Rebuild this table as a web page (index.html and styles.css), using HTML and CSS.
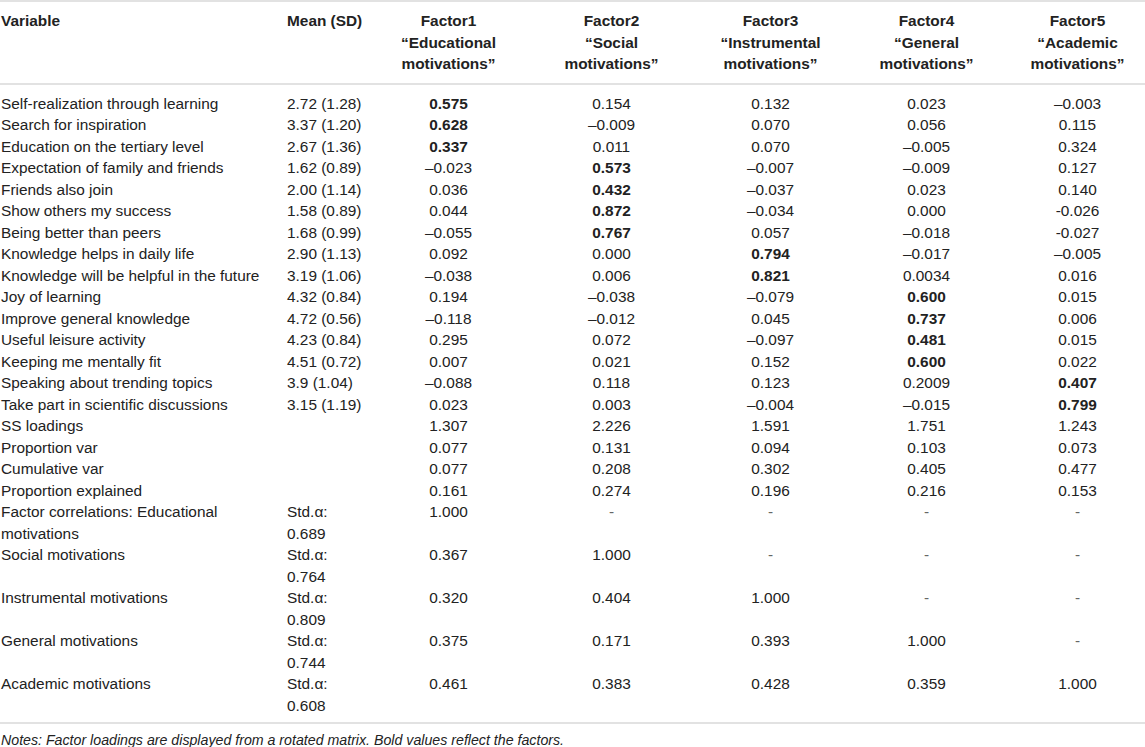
FILE: index.html
```html
<!DOCTYPE html>
<html lang="en">
<head>
    <meta charset="UTF-8">
    <meta name="viewport" content="width=device-width, initial-scale=1.0">
    <title>Factor analysis of motivations</title>
    <link rel="stylesheet" href="styles.css">
</head>
<body>
    <table class="factors">
        <colgroup>
            <col class="c-var">
            <col class="c-mean">
            <col class="c-f1">
            <col class="c-f2">
            <col class="c-f3">
            <col class="c-f4">
            <col class="c-f5">
        </colgroup>
        <thead>
            <tr>
                <th class="left">Variable</th>
                <th class="left mean">Mean (SD)</th>
                <th>Factor1<br>“Educational<br>motivations”</th>
                <th>Factor2<br>“Social<br>motivations”</th>
                <th>Factor3<br>“Instrumental<br>motivations”</th>
                <th>Factor4<br>“General<br>motivations”</th>
                <th>Factor5<br>“Academic<br>motivations”</th>
            </tr>
        </thead>
        <tbody>
            <tr class="first"><td class="left">Self-realization through learning</td><td class="left mean">2.72 (1.28)</td><td><b>0.575</b></td><td>0.154</td><td>0.132</td><td>0.023</td><td>–0.003</td></tr>
            <tr><td class="left">Search for inspiration</td><td class="left mean">3.37 (1.20)</td><td><b>0.628</b></td><td>–0.009</td><td>0.070</td><td>0.056</td><td>0.115</td></tr>
            <tr><td class="left">Education on the tertiary level</td><td class="left mean">2.67 (1.36)</td><td><b>0.337</b></td><td>0.011</td><td>0.070</td><td>–0.005</td><td>0.324</td></tr>
            <tr><td class="left">Expectation of family and friends</td><td class="left mean">1.62 (0.89)</td><td>–0.023</td><td><b>0.573</b></td><td>–0.007</td><td>–0.009</td><td>0.127</td></tr>
            <tr><td class="left">Friends also join</td><td class="left mean">2.00 (1.14)</td><td>0.036</td><td><b>0.432</b></td><td>–0.037</td><td>0.023</td><td>0.140</td></tr>
            <tr><td class="left">Show others my success</td><td class="left mean">1.58 (0.89)</td><td>0.044</td><td><b>0.872</b></td><td>–0.034</td><td>0.000</td><td>-0.026</td></tr>
            <tr><td class="left">Being better than peers</td><td class="left mean">1.68 (0.99)</td><td>–0.055</td><td><b>0.767</b></td><td>0.057</td><td>–0.018</td><td>-0.027</td></tr>
            <tr><td class="left">Knowledge helps in daily life</td><td class="left mean">2.90 (1.13)</td><td>0.092</td><td>0.000</td><td><b>0.794</b></td><td>–0.017</td><td>–0.005</td></tr>
            <tr><td class="left">Knowledge will be helpful in the future</td><td class="left mean">3.19 (1.06)</td><td>–0.038</td><td>0.006</td><td><b>0.821</b></td><td>0.0034</td><td>0.016</td></tr>
            <tr><td class="left">Joy of learning</td><td class="left mean">4.32 (0.84)</td><td>0.194</td><td>–0.038</td><td>–0.079</td><td><b>0.600</b></td><td>0.015</td></tr>
            <tr><td class="left">Improve general knowledge</td><td class="left mean">4.72 (0.56)</td><td>–0.118</td><td>–0.012</td><td>0.045</td><td><b>0.737</b></td><td>0.006</td></tr>
            <tr><td class="left">Useful leisure activity</td><td class="left mean">4.23 (0.84)</td><td>0.295</td><td>0.072</td><td>–0.097</td><td><b>0.481</b></td><td>0.015</td></tr>
            <tr><td class="left">Keeping me mentally fit</td><td class="left mean">4.51 (0.72)</td><td>0.007</td><td>0.021</td><td>0.152</td><td><b>0.600</b></td><td>0.022</td></tr>
            <tr><td class="left">Speaking about trending topics</td><td class="left mean">3.9 (1.04)</td><td>–0.088</td><td>0.118</td><td>0.123</td><td>0.2009</td><td><b>0.407</b></td></tr>
            <tr><td class="left">Take part in scientific discussions</td><td class="left mean">3.15 (1.19)</td><td>0.023</td><td>0.003</td><td>–0.004</td><td>–0.015</td><td><b>0.799</b></td></tr>
            <tr><td class="left">SS loadings</td><td class="left mean"></td><td>1.307</td><td>2.226</td><td>1.591</td><td>1.751</td><td>1.243</td></tr>
            <tr><td class="left">Proportion var</td><td class="left mean"></td><td>0.077</td><td>0.131</td><td>0.094</td><td>0.103</td><td>0.073</td></tr>
            <tr><td class="left">Cumulative var</td><td class="left mean"></td><td>0.077</td><td>0.208</td><td>0.302</td><td>0.405</td><td>0.477</td></tr>
            <tr><td class="left">Proportion explained</td><td class="left mean"></td><td>0.161</td><td>0.274</td><td>0.196</td><td>0.216</td><td>0.153</td></tr>
            <tr><td class="left">Factor correlations: Educational motivations</td><td class="left mean">Std.α: 0.689</td><td>1.000</td><td class="dash">-</td><td class="dash">-</td><td class="dash">-</td><td class="dash">-</td></tr>
            <tr><td class="left">Social motivations</td><td class="left mean">Std.α: 0.764</td><td>0.367</td><td>1.000</td><td class="dash">-</td><td class="dash">-</td><td class="dash">-</td></tr>
            <tr><td class="left">Instrumental motivations</td><td class="left mean">Std.α: 0.809</td><td>0.320</td><td>0.404</td><td>1.000</td><td class="dash">-</td><td class="dash">-</td></tr>
            <tr><td class="left">General motivations</td><td class="left mean">Std.α: 0.744</td><td>0.375</td><td>0.171</td><td>0.393</td><td>1.000</td><td class="dash">-</td></tr>
            <tr class="last"><td class="left">Academic motivations</td><td class="left mean">Std.α: 0.608</td><td>0.461</td><td>0.383</td><td>0.428</td><td>0.359</td><td>1.000</td></tr>
        </tbody>
    </table>
    <p class="notes">Notes: Factor loadings are displayed from a rotated matrix. Bold values reflect the factors.</p>
</body>
</html>
```

FILE: styles.css
```css
body {
    font-family: "Liberation Sans", Arial, sans-serif;
    font-size: 15.4px;
    color: #222;
    margin: 0;
    background: #fff;
}
.factors {
    width: 1145px;
    border-collapse: collapse;
    table-layout: fixed;
    border-top: 2px solid #e2e2e2;
    border-bottom: 2px solid #e2e2e2;
}
.c-var { width: 286px; }
.c-mean { width: 86px; }
.c-f1 { width: 153px; }
.c-f2 { width: 173px; }
.c-f3 { width: 145px; }
.c-f4 { width: 167px; }
.c-f5 { width: 135px; }
th, td {
    padding: 0;
    line-height: 21.5px;
    text-align: center;
    vertical-align: top;
    font-weight: normal;
}
th {
    font-weight: bold;
    padding-top: 8px;
    padding-bottom: 8px;
}
thead tr {
    border-bottom: 2px solid #e2e2e2;
}
.left {
    text-align: left;
    padding-left: 1px;
}
.mean {
    padding-right: 7px;
}
.dash {
    color: #666;
}
tr.first td {
    padding-top: 8px;
}
tr.last td {
    padding-bottom: 6px;
}
.notes {
    font-style: italic;
    font-size: 14.2px;
    margin: 8px 0 0 1px;
}
```
